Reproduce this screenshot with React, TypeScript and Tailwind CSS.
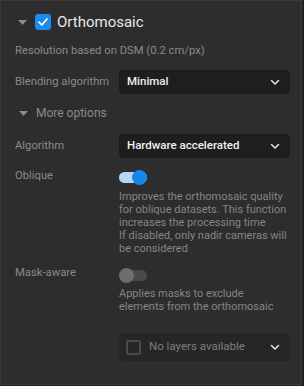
import { useState } from 'react';

function Chevron() {
  return (
    <svg width="12" height="12" viewBox="0 0 12 12" fill="none">
      <path d="M2.5 4.5 6 8l3.5-3.5" stroke="#e5e5e5" strokeWidth="1.5" strokeLinecap="round" strokeLinejoin="round" />
    </svg>
  );
}

function Caret() {
  return (
    <svg width="9" height="5" viewBox="0 0 9 5">
      <path d="M0 0h9L4.5 5z" fill="#8c8c8c" />
    </svg>
  );
}

function Toggle({ on }: { on: boolean }) {
  return (
    <div className="relative h-[15px] w-[28px]">
      <div className={`absolute left-0 right-0 top-[2px] h-[11px] rounded-full ${on ? 'bg-[#b7d6f4]' : 'bg-[#4a4a4a]'}`} />
      <div
        className={`absolute top-0 h-[15px] w-[15px] rounded-full ${on ? 'right-0 bg-[#1388e8]' : 'left-0 bg-[#6e6e6e]'}`}
      />
    </div>
  );
}

function Select({ label }: { label: string }) {
  return (
    <div className="flex h-[24px] flex-1 items-center justify-between rounded-[4px] bg-[#1e1e1e] pl-2 pr-[9px]">
      <span className="text-[11.5px] font-medium text-[#f0f0f0]">{label}</span>
      <Chevron />
    </div>
  );
}

export default function App() {
  const [oblique] = useState(true);

  return (
    <div
      className="h-[386px] w-[304px] bg-[#1f1f1f]"
      style={{ fontFamily: 'Roboto, "Noto Sans", sans-serif' }}
    >
      <div className="h-[385px] w-[302px] border border-[#3a3a3a] bg-[#2d2d2d] pl-[14px] pr-[11px]">
        {/* Header */}
        <div className="flex h-[42px] items-center pl-[3px]">
          <Caret />
          <div className="ml-[8px] flex h-[16px] w-[16px] items-center justify-center rounded-[3px] bg-[#1a8cf0]">
            <svg width="12" height="12" viewBox="0 0 12 12" fill="none">
              <path d="M2 6.2 4.8 9 10 3" stroke="white" strokeWidth="1.7" strokeLinecap="round" strokeLinejoin="round" />
            </svg>
          </div>
          <span className="ml-[6px] text-[15px] text-[#e8e8e8]">Orthomosaic</span>
        </div>

        <div className="text-[11.25px] leading-[16px] text-[#8a8a8a]">Resolution based on DSM (0.2 cm/px)</div>

        <div className="mt-[11px] flex items-center">
          <div className="w-[104px] text-[11.25px] text-[#8a8a8a]">Blending algorithm</div>
          <Select label="Minimal" />
        </div>

        <div className="mt-[11px] flex h-[16px] items-center gap-[8px] pl-[4px]">
          <Caret />
          <span className="text-[12px] text-[#8a8a8a]">More options</span>
        </div>

        <div className="mt-[13px] flex items-center">
          <div className="w-[104px] text-[11.25px] text-[#8a8a8a]">Algorithm</div>
          <Select label="Hardware accelerated" />
        </div>

        <div className="mt-[10px] flex">
          <div className="w-[104px] text-[11.25px] leading-[16px] text-[#8a8a8a]">Oblique</div>
          <div className="flex-1">
            <div className="pt-[2px]">
              <Toggle on={oblique} />
            </div>
            <p className="mt-[5px] whitespace-nowrap text-[11px] leading-[13px] text-[#858585]">
              Improves the orthomosaic quality
              <br />
              for oblique datasets. This function
              <br />
              increases the processing time
              <br />
              If disabled, only nadir cameras will
              <br />
              be considered
            </p>
          </div>
        </div>

        <div className="mt-[10px] flex">
          <div className="w-[104px] text-[11.25px] leading-[16px] text-[#8a8a8a]">Mask-aware</div>
          <div className="flex-1">
            <div className="pt-[3px]">
              <Toggle on={false} />
            </div>
            <p className="mt-[4px] whitespace-nowrap text-[11px] leading-[13px] text-[#858585]">
              Applies masks to exclude
              <br />
              elements from the orthomosaic
            </p>
          </div>
        </div>

        <div className="mt-[20px] flex">
          <div className="w-[104px]" />
          <div className="flex h-[28px] flex-1 items-center justify-between rounded-[4px] bg-[#262626] pl-[7px] pr-[9px]">
            <div className="flex items-center gap-[8px]">
              <div className="h-[15px] w-[15px] rounded-[2px] border-2 border-[#4a4a4a]" />
              <span className="text-[11.5px] text-[#7e7e7e]">No layers available</span>
            </div>
            <Chevron />
          </div>
        </div>
      </div>
    </div>
  );
}
